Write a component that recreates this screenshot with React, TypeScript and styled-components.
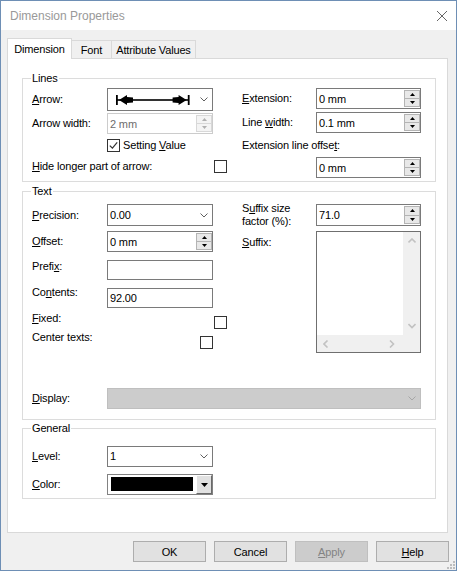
import React from 'react';
import styled, { createGlobalStyle } from 'styled-components';

const GlobalStyle = createGlobalStyle`
  html, body { margin: 0; padding: 0; background: #ffffff; }
  * { box-sizing: border-box; }
`;

const Window = styled.div`
  position: relative;
  width: 457px;
  height: 571px;
  border: 1px solid #6e8fb5;
  display: flex;
  flex-direction: column;
  background: #f0f0f0;
  font-family: "Liberation Sans", Arial, sans-serif;
  font-size: 11px;
  letter-spacing: -0.15px;
  color: #000;
`;

const TitleBar = styled.div`
  height: 29px;
  flex: none;
  background: #ffffff;
  display: flex;
  align-items: center;
  justify-content: space-between;
  padding: 0 9px;
  font-size: 12px;
  letter-spacing: 0;
  color: #999999;
`;

const Body = styled.div`
  flex: 1;
  display: flex;
  flex-direction: column;
  padding: 8px 8px 8px 6px;
`;

const TabStrip = styled.div`
  display: flex;
  align-items: flex-end;
  height: 21px;
  flex: none;
  position: relative;
  z-index: 1;
`;

const Tab = styled.div<{ $active?: boolean; $w: number; $first?: boolean }>`
  width: ${(p) => p.$w}px;
  height: ${(p) => (p.$active ? 21 : 18)}px;
  margin-bottom: ${(p) => (p.$active ? 0 : 1)}px;
  margin-left: ${(p) => (p.$first ? 0 : -1)}px;
  border: 1px solid #d9d9d9;
  border-bottom: none;
  background: ${(p) => (p.$active ? '#ffffff' : '#f0f0f0')};
  display: flex;
  align-items: center;
  justify-content: center;
  padding: ${(p) => (p.$active ? '0 0 1px 0' : '1px 0 0 0')};
  position: relative;
  z-index: ${(p) => (p.$active ? 2 : 1)};
  white-space: nowrap;
`;

const Panel = styled.div`
  margin-top: -1px;
  height: 475px;
  flex: none;
  background: #ffffff;
  border: 1px solid #d9d9d9;
  padding: 19px 11px 0 14px;
  display: flex;
  flex-direction: column;
`;

const Group = styled.div<{ $pt: number; $pb: number; $mt?: number }>`
  position: relative;
  border: 1px solid #dcdcdc;
  padding: ${(p) => p.$pt}px 14px ${(p) => p.$pb}px 9px;
  margin-top: ${(p) => p.$mt ?? 0}px;
`;

const Legend = styled.span`
  position: absolute;
  top: -7px;
  left: 8px;
  padding: 0 1px;
  background: #ffffff;
  line-height: 13px;
  white-space: nowrap;
`;

const Columns = styled.div`
  display: flex;
  gap: 14px;
  align-items: flex-start;
`;

const Column = styled.div<{ $w: number }>`
  width: ${(p) => p.$w}px;
  flex: none;
  display: flex;
  flex-direction: column;
`;

const Row = styled.div<{ $h: number; $mt?: number; $align?: string; $pl?: number }>`
  display: flex;
  align-items: ${(p) => p.$align ?? 'center'};
  height: ${(p) => p.$h}px;
  margin-top: ${(p) => p.$mt ?? 0}px;
  padding-left: ${(p) => p.$pl ?? 0}px;
  flex: none;
`;

const Label = styled.span<{ $w?: number; $dy?: number }>`
  ${(p) => (p.$w ? `width: ${p.$w}px; flex: none;` : '')}
  line-height: 13px;
  white-space: nowrap;
  margin-top: ${(p) => p.$dy ?? 0}px;
`;

const CheckLabel = styled.span`
  line-height: 13px;
  white-space: nowrap;
  margin-left: 3px;
`;

const ComboBox = styled.div<{ $h: number }>`
  width: 106px;
  height: ${(p) => p.$h}px;
  flex: none;
  border: 1px solid #7a7a7a;
  background: #ffffff;
  display: flex;
  align-items: center;
  padding: 0 4px 0 2px;
`;

const ComboText = styled.span`
  flex: 1;
  line-height: 13px;
  white-space: nowrap;
`;

const ArrowPreview = styled.span`
  flex: 1;
  display: flex;
  align-items: center;
  padding-left: 6px;
`;

const DisabledCombo = styled.div`
  flex: 1;
  height: 21px;
  border: 1px solid #bfbfbf;
  background: #cccccc;
  display: flex;
  align-items: center;
  justify-content: flex-end;
  padding-right: 4px;
`;

const SpinBox = styled.div<{ $w: number; $h?: number; $disabled?: boolean }>`
  width: ${(p) => p.$w}px;
  height: ${(p) => p.$h ?? 21}px;
  flex: none;
  border: 1px solid ${(p) => (p.$disabled ? '#cccccc' : '#7a7a7a')};
  background: #ffffff;
  display: flex;
  align-items: stretch;
  padding: 1px 0 1px 2px;
`;

const SpinValue = styled.span<{ $disabled?: boolean }>`
  flex: 1;
  display: flex;
  align-items: center;
  color: ${(p) => (p.$disabled ? '#6d6d6d' : '#000000')};
  white-space: nowrap;
`;

const SpinButtons = styled.div`
  width: 16px;
  flex: none;
  display: flex;
  flex-direction: column;
`;

const SpinHalf = styled.div<{ $disabled?: boolean; $second?: boolean }>`
  flex: 1;
  margin-top: ${(p) => (p.$second ? -1 : 0)}px;
  border: 1px solid ${(p) => (p.$disabled ? '#d8d8d8' : '#b4b4b4')};
  background: ${(p) => (p.$disabled ? '#f4f4f4' : '#e8e8e8')};
  display: flex;
  align-items: center;
  justify-content: center;
`;

const TextBox = styled.div`
  width: 106px;
  height: 20px;
  flex: none;
  border: 1px solid #7a7a7a;
  background: #ffffff;
  display: flex;
  align-items: center;
  padding-left: 2px;
  white-space: nowrap;
`;

const CheckBox = styled.span<{ $mr?: number; $mt?: number; $auto?: boolean }>`
  width: 13px;
  height: 13px;
  flex: none;
  border: 1px solid #333333;
  background: #ffffff;
  display: flex;
  align-items: center;
  justify-content: center;
  margin-left: ${(p) => (p.$auto ? 'auto' : '0')};
  margin-right: ${(p) => p.$mr ?? 0}px;
  margin-top: ${(p) => p.$mt ?? 0}px;
`;

const TextArea = styled.div`
  width: 105px;
  height: 122px;
  flex: none;
  border: 1px solid #6f6f6f;
  background: #ffffff;
  display: grid;
  grid-template-columns: 1fr 17px;
  grid-template-rows: 1fr 17px;
`;

const TextAreaContent = styled.div`
  background: #ffffff;
`;

const ScrollTrack = styled.div<{ $dir: 'v' | 'h' }>`
  background: #f0f0f0;
  display: flex;
  flex-direction: ${(p) => (p.$dir === 'v' ? 'column' : 'row')};
  align-items: center;
  justify-content: space-between;
  padding: ${(p) => (p.$dir === 'v' ? '6px 0 6px 0' : '0 8px 0 6px')};
`;

const ScrollCorner = styled.div`
  background: #f0f0f0;
`;

const ColorCombo = styled.div`
  width: 106px;
  height: 21px;
  flex: none;
  border: 1px solid #828282;
  background: #ffffff;
  display: flex;
  align-items: stretch;
  padding: 0 0 0 3px;
`;

const Swatch = styled.span`
  width: 82px;
  height: 14px;
  margin-top: 2px;
  background: #000000;
  flex: none;
`;

const DropButton = styled.span`
  width: 16px;
  height: 19px;
  margin-left: 3px;
  flex: none;
  background: #e1e1e1;
  border-style: solid;
  border-width: 1px;
  border-color: #ffffff #696969 #696969 #ffffff;
  display: flex;
  align-items: center;
  justify-content: center;
`;

const ButtonRow = styled.div`
  display: flex;
  justify-content: flex-end;
  gap: 8px;
  margin-top: 8px;
  margin-right: -1px;
  flex: none;
`;

const Button = styled.button<{ $disabled?: boolean }>`
  width: 73px;
  height: 21px;
  padding: 0;
  margin: 0;
  font: inherit;
  letter-spacing: inherit;
  background: ${(p) => (p.$disabled ? '#cccccc' : '#e1e1e1')};
  border: 1px solid ${(p) => (p.$disabled ? '#bfbfbf' : '#adadad')};
  color: ${(p) => (p.$disabled ? '#838383' : '#000000')};
  border-radius: 0;
`;

const Grip = styled.svg`
  position: absolute;
  right: 1px;
  bottom: 1px;
`;

const Chevron = ({ color = '#606060' }: { color?: string }) => (
  <svg width="8" height="5" viewBox="0 0 8 5">
    <polyline points="0.5,0.5 4,4 7.5,0.5" fill="none" stroke={color} strokeWidth="1" />
  </svg>
);

const UpTri = ({ color = '#000' }: { color?: string }) => (
  <svg width="5" height="3" viewBox="0 0 5 3">
    <polygon points="0,3 2.5,0 5,3" fill={color} />
  </svg>
);

const DownTri = ({ color = '#000', w = 5, h = 3 }: { color?: string; w?: number; h?: number }) => (
  <svg width={w} height={h} viewBox={`0 0 ${w} ${h}`}>
    <polygon points={`0,0 ${w},0 ${w / 2},${h}`} fill={color} />
  </svg>
);

const Spin = ({ value, w, h, disabled }: { value: string; w: number; h?: number; disabled?: boolean }) => (
  <SpinBox $w={w} $h={h} $disabled={disabled}>
    <SpinValue $disabled={disabled}>{value}</SpinValue>
    <SpinButtons>
      <SpinHalf $disabled={disabled}>
        <UpTri color={disabled ? '#b0b0b0' : '#000'} />
      </SpinHalf>
      <SpinHalf $disabled={disabled} $second>
        <DownTri color={disabled ? '#b0b0b0' : '#000'} />
      </SpinHalf>
    </SpinButtons>
  </SpinBox>
);

const Combo = ({ value, h = 22 }: { value: string; h?: number }) => (
  <ComboBox $h={h}>
    <ComboText>{value}</ComboText>
    <Chevron />
  </ComboBox>
);

const CheckMark = () => (
  <svg width="9" height="9" viewBox="0 0 9 9">
    <polyline points="0.8,4.6 3.4,7.2 8.2,1.4" fill="none" stroke="#333" strokeWidth="1.2" />
  </svg>
);

const ArrowGlyph = () => (
  <svg width="74" height="12" viewBox="0 0 74 12">
    <rect x="0" y="1" width="1.8" height="10" fill="#000" />
    <rect x="71.8" y="1" width="1.8" height="10" fill="#000" />
    <rect x="1" y="5.2" width="72" height="1.6" fill="#000" />
    <polygon points="3,6 11,1 11,3 17,3.5 17,8.5 11,9 11,11" fill="#000" />
    <polygon points="70.6,6 62.6,1 62.6,3 56.6,3.5 56.6,8.5 62.6,9 62.6,11" fill="#000" />
  </svg>
);

const ScrollChevron = ({ dir }: { dir: 'up' | 'down' | 'left' | 'right' }) => {
  const pts: Record<string, string> = {
    up: '0.5,4.5 4,1 7.5,4.5',
    down: '0.5,1 4,4.5 7.5,1',
    left: '4.5,0.5 1,4 4.5,7.5',
    right: '1,0.5 4.5,4 1,7.5',
  };
  const vertical = dir === 'up' || dir === 'down';
  return (
    <svg width={vertical ? 8 : 6} height={vertical ? 6 : 8} viewBox={vertical ? '0 0 8 6' : '0 0 6 8'}>
      <polyline points={pts[dir]} fill="none" stroke="#c2c2c2" strokeWidth="1.6" />
    </svg>
  );
};

export default function App() {
  return (
    <>
      <GlobalStyle />
      <Window>
        <TitleBar>
          <span>Dimension Properties</span>
          <svg width="10" height="10" viewBox="0 0 10 10">
            <line x1="0" y1="0" x2="10" y2="10" stroke="#666" strokeWidth="1" />
            <line x1="10" y1="0" x2="0" y2="10" stroke="#666" strokeWidth="1" />
          </svg>
        </TitleBar>
        <Body>
          <TabStrip>
            <Tab $active $w={65} $first>Dimension</Tab>
            <Tab $w={41}>Font</Tab>
            <Tab $w={85}>Attribute Values</Tab>
          </TabStrip>
          <Panel>
            <Group $pt={9} $pb={3}>
              <Legend>Lines</Legend>
              <Columns>
                <Column $w={196}>
                  <Row $h={23}>
                    <Label $w={75}><u>A</u>rrow:</Label>
                    <ComboBox $h={23}>
                      <ArrowPreview><ArrowGlyph /></ArrowPreview>
                      <Chevron />
                    </ComboBox>
                  </Row>
                  <Row $h={21} $mt={2}>
                    <Label $w={75}>Arrow width:</Label>
                    <Spin value="2 mm" w={106} disabled />
                  </Row>
                  <Row $h={13} $mt={5} $pl={75}>
                    <CheckBox><CheckMark /></CheckBox>
                    <CheckLabel>Setting <u>V</u>alue</CheckLabel>
                  </Row>
                  <Row $h={13} $mt={8}>
                    <Label><u>H</u>ide longer part of arrow:</Label>
                    <CheckBox $auto $mr={1} />
                  </Row>
                </Column>
                <Column $w={179}>
                  <Row $h={21}>
                    <Label $w={74}><u>E</u>xtension:</Label>
                    <Spin value="0 mm" w={105} />
                  </Row>
                  <Row $h={21} $mt={3}>
                    <Label $w={74}>Line <u>w</u>idth:</Label>
                    <Spin value="0.1 mm" w={105} />
                  </Row>
                  <Row $h={13} $mt={6}>
                    <Label>Extension line offse<u>t</u>:</Label>
                  </Row>
                  <Row $h={21} $mt={5} $pl={74}>
                    <Spin value="0 mm" w={105} />
                  </Row>
                </Column>
              </Columns>
            </Group>

            <Group $pt={12} $pb={10} $mt={9}>
              <Legend>Text</Legend>
              <Columns>
                <Column $w={196}>
                  <Row $h={22}>
                    <Label $w={75}><u>P</u>recision:</Label>
                    <Combo value="0.00" h={22} />
                  </Row>
                  <Row $h={21} $mt={5}>
                    <Label $w={75}><u>O</u>ffset:</Label>
                    <Spin value="0 mm" w={106} />
                  </Row>
                  <Row $h={20} $mt={8} $align="flex-start">
                    <Label $w={75}>Prefi<u>x</u>:</Label>
                    <TextBox />
                  </Row>
                  <Row $h={20} $mt={8} $align="flex-start">
                    <Label $w={75} $dy={-2}>Co<u>n</u>tents:</Label>
                    <TextBox>92.00</TextBox>
                  </Row>
                  <Row $h={17} $mt={4} $align="flex-start">
                    <Label><u>F</u>ixed:</Label>
                    <CheckBox $auto $mr={1} $mt={4} />
                  </Row>
                  <Row $h={18} $mt={2} $align="flex-start">
                    <Label>Center texts:</Label>
                    <CheckBox $auto $mr={15} $mt={5} />
                  </Row>
                </Column>
                <Column $w={179}>
                  <Row $h={22}>
                    <Label $w={74}>S<u>u</u>ffix size<br />factor (%):</Label>
                    <Spin value="71.0" w={105} h={22} />
                  </Row>
                  <Row $h={122} $mt={5} $align="flex-start">
                    <Label $w={74} $dy={5}><u>S</u>uffix:</Label>
                    <TextArea>
                      <TextAreaContent />
                      <ScrollTrack $dir="v">
                        <ScrollChevron dir="up" />
                        <ScrollChevron dir="down" />
                      </ScrollTrack>
                      <ScrollTrack $dir="h">
                        <ScrollChevron dir="left" />
                        <ScrollChevron dir="right" />
                      </ScrollTrack>
                      <ScrollCorner />
                    </TextArea>
                  </Row>
                </Column>
              </Columns>
              <Row $h={21} $mt={35}>
                <Label $w={75}><u>D</u>isplay:</Label>
                <DisabledCombo>
                  <Chevron color="#a6a6a6" />
                </DisabledCombo>
              </Row>
            </Group>

            <Group $pt={17} $pb={3} $mt={8}>
              <Legend>General</Legend>
              <Row $h={21}>
                <Label $w={75}><u>L</u>evel:</Label>
                <Combo value="1" h={21} />
              </Row>
              <Row $h={21} $mt={7}>
                <Label $w={75}><u>C</u>olor:</Label>
                <ColorCombo>
                  <Swatch />
                  <DropButton>
                    <DownTri w={7} h={4} />
                  </DropButton>
                </ColorCombo>
              </Row>
            </Group>
          </Panel>
          <ButtonRow>
            <Button>OK</Button>
            <Button>Cancel</Button>
            <Button $disabled><u>A</u>pply</Button>
            <Button><u>H</u>elp</Button>
          </ButtonRow>
        </Body>
        <Grip width="8" height="8" viewBox="0 0 8 8">
          <rect x="6" y="0" width="2" height="2" fill="#bdbdbd" />
          <rect x="3" y="3" width="2" height="2" fill="#bdbdbd" />
          <rect x="6" y="3" width="2" height="2" fill="#bdbdbd" />
          <rect x="0" y="6" width="2" height="2" fill="#bdbdbd" />
          <rect x="3" y="6" width="2" height="2" fill="#bdbdbd" />
          <rect x="6" y="6" width="2" height="2" fill="#bdbdbd" />
        </Grip>
      </Window>
    </>
  );
}
